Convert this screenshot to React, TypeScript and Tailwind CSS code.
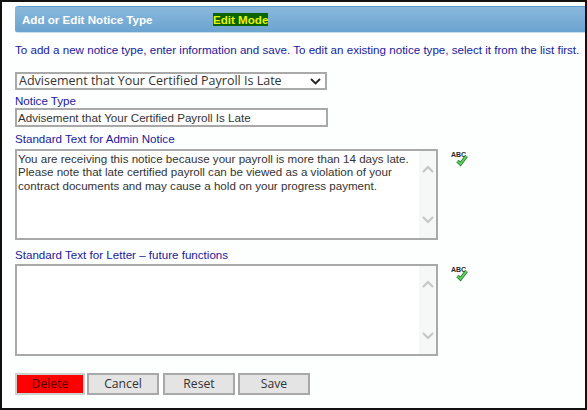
import React from "react";

const ScrollStrip = () => (
  <div className="absolute top-[2px] right-[2px] bottom-[2px] w-[17px] bg-[#f6f7f7] flex flex-col justify-between items-center py-[14px]">
    <svg width="12" height="8" viewBox="0 0 12 8" fill="none" stroke="#c4c6c6" strokeWidth="2"><path d="M1 7l5-5 5 5" /></svg>
    <svg width="12" height="8" viewBox="0 0 12 8" fill="none" stroke="#c4c6c6" strokeWidth="2"><path d="M1 1l5 5 5-5" /></svg>
  </div>
);

const Spell = () => (
  <svg width="20" height="17" viewBox="0 0 20 17" className="ml-[12px] mt-[1px]">
    <text x="1" y="7" fontSize="7" fontWeight="700" fontFamily="Liberation Sans" fill="#2a2a2a">ABC</text>
    <path d="M7.5 11l3 3 6-8" fill="none" stroke="#2c7d38" strokeWidth="3.4" />
    <path d="M7.5 11l3 3 6-8" fill="none" stroke="#5fd85f" strokeWidth="1.6" />
  </svg>
);

const Btn = ({ label, className }: { label: string; className: string }) => (
  <button className={"h-[22px] text-[12.2px] leading-none font-['Open_Sans',sans-serif] border-2 " + className}>{label}</button>
);

export default function App() {
  return (
    <div className="w-[587px] h-[410px] bg-[#fdfefe] border-2 border-[#111] font-['Liberation_Sans',sans-serif] text-[11.6px] text-[#1a1a9c] pl-[13px] overflow-hidden">
      <div className="mt-[4px] h-[27px] bg-gradient-to-b from-[#8ab8dc] to-[#6ba4d0] border-t border-b border-t-[#5f9ccb] border-b-[#c6dff0] rounded-l-[3px] flex items-center text-white font-bold pl-[7px] whitespace-nowrap">
        <span className="w-[191px]">Add or Edit Notice Type</span>
        <span className="bg-[#0a6400] text-[#e6f500] w-[55px] h-[13px] leading-[13px] text-center">Edit Mode</span>
      </div>
      <p className="mt-[10px] leading-[14px] whitespace-nowrap">To add a new notice type, enter information and save. To edit an existing notice type, select it from the list first.</p>
      <div className="relative mt-[15px] w-[312px] h-[18px]">
        <select className="block appearance-none w-full h-full border-2 border-[#a9a9a9] bg-white text-[12.5px] leading-[14px] py-0 text-[#333] font-['Open_Sans',sans-serif] pl-[2px]" defaultValue="a">
          <option value="a">Advisement that Your Certified Payroll Is Late</option>
        </select>
        <svg width="11" height="7" viewBox="0 0 11 7" fill="none" stroke="#222" strokeWidth="1.8" className="absolute right-[6px] top-[6px]"><path d="M1 1l4.5 4.5L10 1" /></svg>
      </div>
      <div className="mt-[4px] leading-[14px]">Notice Type</div>
      <input className="block w-[313px] h-[19px] border-2 border-[#a9a9a9] bg-white text-[#333] px-[1px]" defaultValue="Advisement that Your Certified Payroll Is Late" />
      <div className="mt-[5px] leading-[14px]">Standard Text for Admin Notice</div>
      <div className="flex mt-[3px]">
        <div className="relative w-[423px] h-[91px]">
          <textarea readOnly className="block w-full h-full border-2 border-[#a9a9a9] bg-white leading-[13.3px] text-[#333] px-[1px] py-[1px] pr-[20px] resize-none overflow-hidden" defaultValue={"You are receiving this notice because your payroll is more than 14 days late. Please note that late certified payroll can be viewed as a violation of your contract documents and may cause a hold on your progress payment."} />
          <ScrollStrip />
        </div>
        <Spell />
      </div>
      <div className="mt-[8px] leading-[14px]">Standard Text for Letter – future functions</div>
      <div className="flex mt-[2px]">
        <div className="relative w-[423px] h-[92px]">
          <textarea readOnly className="block w-full h-full border-2 border-[#a9a9a9] bg-white resize-none overflow-hidden" />
          <ScrollStrip />
        </div>
        <Spell />
      </div>
      <div className="flex mt-[17px] text-[#333]">
        <Btn label="Delete" className="w-[70px] bg-[#fe0000] border-[#cfcfcf] text-[#4a0000]" />
        <Btn label="Cancel" className="ml-[2px] w-[72px] bg-[#e4e4e4] border-[#a8a8a8]" />
        <Btn label="Reset" className="ml-[4px] w-[72px] bg-[#e4e4e4] border-[#a8a8a8]" />
        <Btn label="Save" className="ml-[3px] w-[72px] bg-[#e4e4e4] border-[#a8a8a8]" />
      </div>
    </div>
  );
}
